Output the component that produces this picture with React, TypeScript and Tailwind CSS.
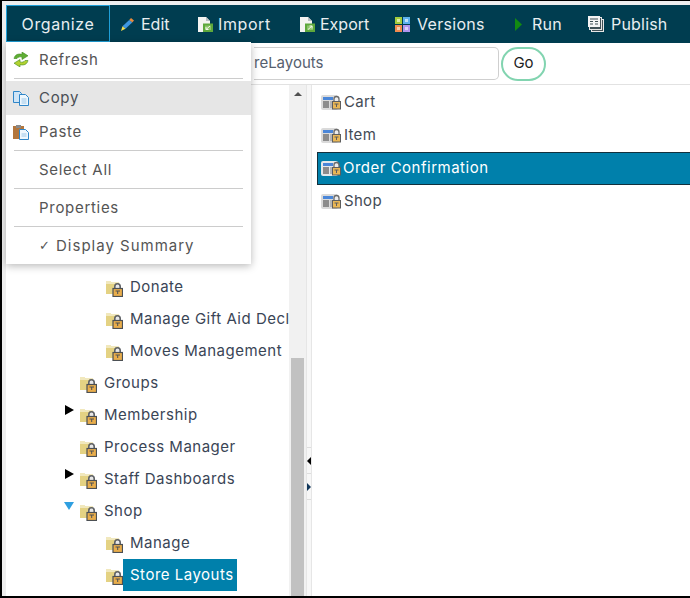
import type { ReactNode } from 'react'

const FONT = "font-['Inter','Liberation_Sans',sans-serif]"

function FolderLock() {
  return (
    <svg width="17" height="16" viewBox="0 0 17 16" className="shrink-0">
      <path d="M0 0h4l1.500 1.500H13V13H0z" fill="#e4d283" />
      <path d="M0 0h4l1.500 1.500H9V3H0z" fill="#f1e8bd" />
      <path d="M8.800 7.500V5.500a2.700 2.700 0 0 1 5.400 0v2" fill="#e8e8e8" stroke="#5f6266" strokeWidth="1.600" />
      <rect x="7" y="7.500" width="9.500" height="8" fill="#e9ad4b" stroke="#4c5054" strokeWidth="1.200" />
      <path d="M9.500 10h4.500M11.700 10v3" stroke="#4c5054" fill="none" />
    </svg>
  )
}

function LayoutLock({ selected }: { selected?: boolean }) {
  return (
    <svg width="20" height="16" viewBox="0 0 20 16" className="shrink-0">
      <rect x="0" y="0" width="17" height="15" rx="2" fill={selected ? '#e4e8ea' : '#dadada'} />
      <rect x="2" y="2" width="10" height="3" fill="#4a86d8" />
      <rect x="2" y="6" width="6" height="7" fill="#8c8c8c" />
      <rect x="9" y="6" width="3" height="7" fill="#b4b4b4" />
      <path d="M13 6.500V4a2.500 2.500 0 0 1 5 0v2.500" fill="#ececec" stroke="#6b6b6b" strokeWidth="1.300" />
      <rect x="11.500" y="6.500" width="8" height="7.500" fill="#eab755" stroke="#5e5e5e" />
      <path d="M13.500 9h4M15.500 9v3" stroke="#5e5e5e" fill="none" />
    </svg>
  )
}

function Pencil() {
  return (
    <svg width="13" height="13" viewBox="0 0 13 13">
      <path d="M10 0l3 2.500-1.800 2-3-2.500z" fill="#e88a3c" />
      <path d="M8.200 2l3 2.500-6.700 6.300-3-2.500z" fill="#3f97e0" />
      <path d="M1.500 8.300l3 2.500L0 13z" fill="#f5e04e" />
    </svg>
  )
}

function DocArrow({ rotate }: { rotate?: boolean }) {
  return (
    <svg width="15" height="15" viewBox="0 0 15 15">
      <path d="M0 0h8l4 4v11H0z" fill="#f4f4f2" />
      <path d="M8 0v4h4z" fill="#b9bfc2" />
      <rect x="5" y="6.500" width="10" height="8.500" fill="#5ea83c" />
      <rect x="7" y="8.500" width="6" height="4.500" fill="#8cc46a" />
      <path d={rotate ? 'M8 12.500l4-3.500M9.500 9H12v2.500' : 'M12 9l-4 3.500M8 10v2.500h2.500'} stroke="#f2f8ea" fill="none" />
    </svg>
  )
}

function Versions() {
  return (
    <svg width="15" height="15" viewBox="0 0 15 15">
      <rect width="7" height="7" fill="#a4cc3c" />
      <rect x="8" width="7" height="7" fill="#5cb0ee" />
      <rect y="8" width="7" height="7" fill="#f28a4e" />
      <rect x="8" y="8" width="7" height="7" fill="#b094ee" />
      <rect x="2" y="2" width="3" height="3" fill="#dcecaa" />
      <rect x="10" y="2" width="3" height="3" fill="#bfe0f8" />
      <rect x="2" y="10" width="3" height="3" fill="#f9cfae" />
      <rect x="10" y="10" width="3" height="3" fill="#ddd0f8" />
    </svg>
  )
}

function RunIcon() {
  return (
    <svg width="7" height="13" viewBox="0 0 7 13">
      <path d="M0 0l7 6.500L0 13z" fill="#128a12" />
    </svg>
  )
}

function PublishIcon() {
  return (
    <svg width="16" height="16" viewBox="0 0 16 16">
      <rect x="3.500" y="3.500" width="12" height="12" fill="#3f4f55" stroke="#e6e6e6" />
      <rect x="1.500" y="1.500" width="12" height="12" fill="#3f4f55" stroke="#e6e6e6" />
      <rect x="0" y="0" width="12" height="11" fill="#f4f4f4" />
      <path d="M2 3h8M2 5.500h3M7 5.500h3M2 8h3M7 8h3" stroke="#3f4f55" strokeWidth="1.200" />
    </svg>
  )
}

function RefreshIcon() {
  return (
    <svg width="16" height="15" viewBox="0 0 16 15">
      <path d="M1 6.500C2 2.500 5 1.500 9 2.300V0l6 3.800-6 3.700V5C6.500 4.500 5 5 4 6.500z" fill="#5fae34" stroke="#3f8a1e" strokeWidth="0.600" />
      <path d="M15 8.500c-1 4-4 5-8 4.200V15L1 11.200 7 7.500V10c2.500.5 4 0 5-1.500z" fill="#b3d22f" stroke="#3f8a1e" strokeWidth="0.600" />
    </svg>
  )
}

function CopyIcon() {
  return (
    <svg width="16" height="15" viewBox="0 0 16 15">
      <path d="M.5.500h6l2 2v9h-8z" fill="#cfe5f7" stroke="#2f86c9" />
      <path d="M6.500 3.500h6l3 3v8h-9z" fill="#eef7fd" stroke="#2f86c9" />
      <path d="M8.500 8h5M8.500 10h5M8.500 12h5" stroke="#9cc7e8" />
    </svg>
  )
}

function PasteIcon() {
  return (
    <svg width="16" height="15" viewBox="0 0 16 15">
      <rect x="0" y="1" width="11" height="13" fill="#b2763d" />
      <rect x="3" y="0" width="5" height="3" fill="#8a8a8a" />
      <path d="M6.500 4.500h6l3 3v7h-9z" fill="#eef7fd" stroke="#2f86c9" />
      <path d="M8.500 9h5M8.500 11h5" stroke="#9cc7e8" />
    </svg>
  )
}

function NavItem({ icon, label, className }: { icon?: ReactNode; label: string; className: string }) {
  return (
    <div className={`flex items-center text-[16px] text-[#e8eef0] ${className}`}>
      {icon}
      <span>{label}</span>
    </div>
  )
}

function MenuRow({ icon, label, active, lower }: { icon?: ReactNode; label: ReactNode; active?: boolean; lower?: boolean }) {
  return (
    <div className={`relative flex h-[34px] items-center pl-[33px] text-[15px] tracking-[0.7px] ${lower ? 'pt-[2px]' : ''} ${active ? 'bg-[#e6e6e6] text-[#4a4f55]' : 'text-[#555]'}`}>
      {icon && <span className="absolute left-[7px] top-[10px]">{icon}</span>}
      {label}
    </div>
  )
}

function MenuRule() {
  return <div className="mx-[8px] h-px bg-[#cccccc]" />
}

function TreeRow({ label, indent, arrow, selected }: { label: string; indent: number; arrow?: 'closed' | 'open'; selected?: boolean }) {
  return (
    <div className="flex h-[32px] items-center whitespace-nowrap text-[15px] tracking-[0.5px] text-[#3a4556]" style={{ paddingLeft: indent }}>
      {arrow === 'closed' && <div className="ml-[-15px] mr-[6px] mt-[-10px] h-0 w-0 border-y-[5px] border-l-[9px] border-y-transparent border-l-black" />}
      {arrow === 'open' && <div className="ml-[-16px] mr-[6px] mt-[-10px] h-0 w-0 border-x-[5px] border-t-[8px] border-x-transparent border-t-[#2f9fe0]" />}
      <span className="mt-[3px]"><FolderLock /></span>
      {selected ? (
        <span className="flex h-[32px] w-[114px] items-center bg-[#0080ab] pl-[7px] text-white">{label}</span>
      ) : (
        <span className="ml-[7px]">{label}</span>
      )}
    </div>
  )
}

function ListRow({ label, selected }: { label: string; selected?: boolean }) {
  return (
    <div className={`flex h-[33px] items-center gap-[3px] text-[15px] tracking-[0.3px] ${selected ? 'border-y border-l border-[#12303c] bg-[#0080ab] pl-[3px] text-white' : 'pl-[4px] text-[#444b55]'}`}>
      <LayoutLock selected={selected} />
      <span className={selected ? 'ml-[-1px] tracking-[0.5px]' : ''}>{label}</span>
    </div>
  )
}

export default function App() {
  return (
    <div className={`relative h-[598px] w-[690px] overflow-hidden border-t border-b-2 border-l-2 border-black bg-[#eeeeee] pl-[4px] pt-[4px] ${FONT}`}>
      {/* top bar */}
      <div className="flex h-[38px] items-center bg-[#003d50]">
        <NavItem label="Organize" className="mt-[-1px] h-[37px] w-[104px] justify-center border border-[#1f9fd8] tracking-[0.6px]" />
        <NavItem icon={<span className="mr-[7px] flex"><Pencil /></span>} label="Edit" className="ml-[11px] w-[77px]" />
        <NavItem icon={<span className="mr-[5px] flex"><DocArrow /></span>} label="Import" className="w-[102px] tracking-[0.6px]" />
        <NavItem icon={<span className="mr-[5px] flex"><DocArrow rotate /></span>} label="Export" className="w-[95px]" />
        <NavItem icon={<span className="mr-[7px] flex"><Versions /></span>} label="Versions" className="w-[120px] tracking-[0.3px]" />
        <NavItem icon={<span className="mr-[10px] flex"><RunIcon /></span>} label="Run" className="w-[73px] tracking-[0.3px]" />
        <NavItem icon={<span className="mr-[7px] flex"><PublishIcon /></span>} label="Publish" className="tracking-[0.2px]" />
      </div>

      {/* address bar */}
      <div className="flex h-[42px] items-center border-b border-[#e2e2e2] bg-white pl-[248px]">
        <div className="flex h-[33px] w-[245px] items-center rounded-r-[5px] border border-l-0 border-[#cfcfcf] text-[15px] text-[#55606e]">
          reLayouts
        </div>
        <div className="ml-[2px] flex h-[34px] w-[45px] items-center justify-center rounded-[17px] border-2 border-[#82d4b0] text-[15px] text-[#222]">
          Go
        </div>
      </div>

      {/* panes */}
      <div className="flex h-[513px] bg-white">
        <div className="w-[283px] shrink-0 overflow-hidden pt-[186px]">
          <TreeRow label="Donate" indent={100} />
          <TreeRow label="Manage Gift Aid Declarations" indent={100} />
          <TreeRow label="Moves Management" indent={100} />
          <TreeRow label="Groups" indent={74} />
          <TreeRow label="Membership" indent={74} arrow="closed" />
          <TreeRow label="Process Manager" indent={74} />
          <TreeRow label="Staff Dashboards" indent={74} arrow="closed" />
          <TreeRow label="Shop" indent={74} arrow="open" />
          <TreeRow label="Manage" indent={100} />
          <TreeRow label="Store Layouts" indent={100} selected />
        </div>

        {/* scrollbar */}
        <div className="flex w-[17px] shrink-0 flex-col items-center bg-[#f1f1f1]">
          <div className="mt-[7px] h-0 w-0 border-x-[4px] border-b-[4px] border-x-transparent border-b-[#505050]" />
          <div className="mt-[262px] w-[13px] flex-1 bg-[#c1c1c1]" />
        </div>

        {/* splitter */}
        <div className="flex w-[6px] shrink-0 flex-col border-x border-[#e6e6e6] bg-[#f7f7f7]">
          <div className="mt-[362px] flex h-[27px] items-center border-y border-[#dddddd]">
            <div className="h-0 w-0 border-y-[4px] border-r-[4px] border-y-transparent border-r-black" />
          </div>
          <div className="flex h-[26px] items-center border-b border-[#dddddd]">
            <div className="h-0 w-0 border-y-[4px] border-l-[4px] border-y-transparent border-l-[#10365a]" />
          </div>
        </div>

        <div className="flex-1 pl-[5px] pt-[1px]">
          <ListRow label="Cart" />
          <ListRow label="Item" />
          <ListRow label="Order Confirmation" selected />
          <ListRow label="Shop" />
        </div>
      </div>

      {/* Organize menu */}
      <div className="absolute left-[4px] top-[41px] w-[245px] bg-white shadow-[0_2px_8px_rgba(0,0,0,0.28)]">
        <MenuRow icon={<RefreshIcon />} label="Refresh" lower />
        <div className="h-[2px]" />
        <MenuRule />
        <div className="h-[2px]" />
        <MenuRow icon={<CopyIcon />} label="Copy" active />
        <MenuRow icon={<PasteIcon />} label="Paste" />
        <div className="h-px" />
        <MenuRule />
        <div className="h-px" />
        <MenuRow label="Select All" lower />
        <div className="h-[2px]" />
        <MenuRule />
        <div className="h-px" />
        <MenuRow label="Properties" lower />
        <div className="h-[2px]" />
        <MenuRule />
        <div className="h-px" />
        <MenuRow
          lower
          label={
            <>
              <span className="mr-[6px] inline-block w-[11px] font-['DejaVu_Sans',sans-serif] text-[13px] tracking-normal">✓</span>
              <span className="tracking-[1px]">Display Summary</span>
            </>
          }
        />
        <div className="h-[2px]" />
      </div>
    </div>
  )
}
